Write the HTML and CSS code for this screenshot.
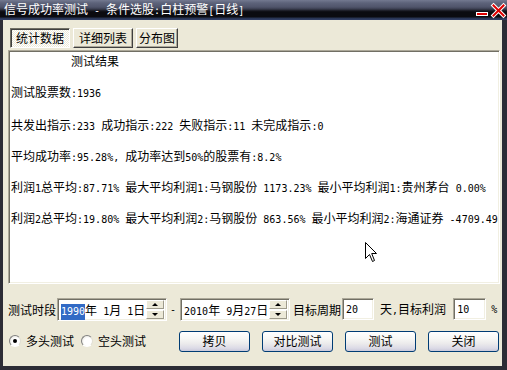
FILE: index.html
```html
<!DOCTYPE html>
<html>
<head>
<meta charset="utf-8">
<link rel="stylesheet" href="styles.css">
</head>
<body>
<div class="window">
  <div class="titlebar">
    <span class="title">信号成功率测试<span class="a"> - </span>条件选股<span class="a">:</span>白柱预警<span class="a">[</span>日线<span class="a">]</span></span>
    <svg class="tb-btns" width="31" height="20" viewBox="0 0 31 20">
      <rect x="0.5" y="12.5" width="11" height="3" fill="#e00000" stroke="#ffffff" stroke-width="1"/>
      <path d="M17.5 5.5 L27.5 15.5 M27.5 5.5 L17.5 15.5" stroke="#ffffff" stroke-width="4" stroke-linecap="square" fill="none"/>
      <path d="M17.5 5.5 L27.5 15.5 M27.5 5.5 L17.5 15.5" stroke="#e00000" stroke-width="2" stroke-linecap="square" fill="none"/>
    </svg>
  </div>
  <div class="client">
    <div class="tabs">
      <div class="tab tab-on">统计数据</div>
      <div class="tab">详细列表</div>
      <div class="tab tab-narrow">分布图</div>
    </div>
    <div class="report">
      <p class="heading">测试结果</p>
      <p>测试股票数<span class="a">:1936</span></p>
      <p class="line-b">共发出指示<span class="a">:233 </span>成功指示<span class="a">:222 </span>失败指示<span class="a">:11 </span>未完成指示<span class="a">:0</span></p>
      <p>平均成功率<span class="a">:95.28%, </span>成功率达到<span class="a">50%</span>的股票有<span class="a">:8.2%</span></p>
      <p>利润<span class="a">1</span>总平均<span class="a">:87.71% </span>最大平均利润<span class="a">1:</span>马钢股份<span class="a"> 1173.23% </span>最小平均利润<span class="a">1:</span>贵州茅台<span class="a"> 0.00%</span></p>
      <p>利润<span class="a">2</span>总平均<span class="a">:19.80% </span>最大平均利润<span class="a">2:</span>马钢股份<span class="a"> 863.56% </span>最小平均利润<span class="a">2:</span>海通证券<span class="a"> -4709.49</span></p>
    </div>
    <div class="params">
      <span class="label">测试时段</span>
      <div class="datebox first">
        <span class="date"><span class="a sel">1990</span>年<span class="a"> 1</span>月<span class="a"> 1</span>日</span>
        <div class="spin"><div class="spin-btn"><span class="arr up"></span></div><div class="spin-btn"><span class="arr down"></span></div></div>
      </div>
      <span class="a dash">-</span>
      <div class="datebox">
        <span class="date"><span class="a">2010</span>年<span class="a"> 9</span>月<span class="a">27</span>日</span>
        <div class="spin"><div class="spin-btn"><span class="arr up"></span></div><div class="spin-btn"><span class="arr down"></span></div></div>
      </div>
      <span class="label period">目标周期</span>
      <div class="field"><span class="a">20</span></div>
      <span class="label target">天<span class="a">,</span>目标利润</span>
      <div class="field field-profit"><span class="a">10</span></div>
      <span class="a pct">%</span>
    </div>
    <div class="actions">
      <label class="radio"><span class="dot checked"></span>多头测试</label>
      <label class="radio radio-2"><span class="dot"></span>空头测试</label>
      <div class="buttons">
        <div class="btn">拷贝</div>
        <div class="btn">对比测试</div>
        <div class="btn">测试</div>
        <div class="btn">关闭</div>
      </div>
    </div>
  </div>
  <svg class="cursor" width="13" height="21" viewBox="0 0 13 21">
    <path d="M0.5 0.5 L0.5 16.5 L4.5 12.5 L7.5 19.5 L9.5 18.5 L6.7 11.5 L11.5 11.5 Z" fill="#ffffff" stroke="#000000" stroke-width="1" stroke-linejoin="miter"/>
  </svg>
</div>
</body>
</html>
```

FILE: styles.css
```css
* {
  box-sizing: border-box;
  margin: 0;
  padding: 0;
}

html, body {
  width: 507px;
  height: 370px;
  overflow: hidden;
}

body {
  font-family: "Noto Sans CJK SC", sans-serif;
  font-size: 12px;
  color: #000;
  background: #ece9d8;
}

.a {
  font-family: "DejaVu Sans Mono", monospace;
  font-size: 10px;
}

.window {
  position: relative;
  width: 507px;
  height: 370px;
  display: flex;
  flex-direction: column;
}

.titlebar {
  flex: none;
  height: 20px;
  display: flex;
  align-items: flex-start;
  color: #fff;
  background: linear-gradient(180deg, #737990 0px, #5d637a 3px, #50556b 7px, #3a3e50 9px, #15151c 11px, #0b0b10 12px, #0b0b10 17px, #26324f 18px, #33416a 20px);
}

.title {
  margin: 3px 0 0 4px;
  height: 12px;
  line-height: 12px;
  white-space: pre;
}

.tb-btns {
  margin-left: auto;
  display: block;
}

.client {
  flex: 1;
  display: flex;
  flex-direction: column;
  border-left: 3px solid #2c2c35;
  border-right: 5px solid #2c2c35;
  border-bottom: 4px solid #2c2c35;
  padding-top: 8px;
}

.tabs {
  display: flex;
  gap: 3px;
  margin-left: 7px;
}

.tab {
  width: 60px;
  height: 20px;
  display: flex;
  align-items: center;
  justify-content: center;
  line-height: 12px;
  border: 1px solid;
  border-color: #fff #404040 #404040 #fff;
  box-shadow: inset -1px -1px #aca899;
}

.tab-narrow {
  width: 42px;
}

.tab-on {
  border-color: #716f64 #fff #fff #716f64;
  box-shadow: inset 1px 1px #404040;
  background: repeating-conic-gradient(#ffffff 0 25%, #ece9d8 0 50%) 0 0 / 2px 2px;
}

.report {
  margin: 2px 0 0 5px;
  width: 492px;
  height: 234px;
  background: #fff;
  border: 1px solid;
  border-color: #aca899 #fff #fff #aca899;
  box-shadow: inset 1px 1px #716f64, inset -1px -1px #f1efe2;
  padding: 4px 0 0 2px;
  display: flex;
  flex-direction: column;
  gap: 19px;
  overflow: hidden;
}

.report p {
  height: 12px;
  line-height: 12px;
  white-space: pre;
}

.report .heading {
  padding-left: 60px;
}

.report .line-b {
  margin-top: 2px;
}

.params {
  display: flex;
  align-items: center;
  height: 23px;
  margin: 14px 0 0 5px;
  white-space: pre;
}

.label {
  line-height: 12px;
}

.datebox {
  display: flex;
  align-items: center;
  width: 110px;
  height: 23px;
  background: #fff;
  border: 1px solid;
  border-color: #aca899 #fff #fff #aca899;
  box-shadow: inset 1px 1px #716f64, inset -1px -1px #f1efe2;
  padding: 0 2px 0 3px;
}

.datebox.first {
  margin-left: 1px;
}

.date {
  height: 16px;
  line-height: 16px;
}

.sel {
  display: inline-block;
  line-height: 16px;
  background: #316ac5;
  color: #fff;
}

.spin {
  margin-left: auto;
  display: flex;
  flex-direction: column;
  gap: 1px;
  width: 18px;
}

.spin-btn {
  height: 9px;
  display: flex;
  align-items: center;
  justify-content: center;
  background: #ece9d8;
  border: 1px solid;
  border-color: #fff #9d9a8b #9d9a8b #fff;
}

.arr {
  width: 0;
  height: 0;
  border-left: 3px solid transparent;
  border-right: 3px solid transparent;
}

.arr.up {
  border-bottom: 3px solid #000;
}

.arr.down {
  border-top: 3px solid #000;
}

.dash {
  margin: 0 4px 0 3px;
}

.period {
  margin-left: 3px;
}

.field {
  align-self: flex-start;
  width: 32px;
  height: 22px;
  margin-left: 1px;
  background: #fff;
  border: 1px solid;
  border-color: #aca899 #fff #fff #aca899;
  box-shadow: inset 1px 1px #716f64, inset -1px -1px #f1efe2;
  padding: 3px 0 0 3px;
  line-height: 12px;
}

.target {
  margin-left: 6px;
}

.field-profit {
  margin-left: 7px;
  width: 33px;
}

.pct {
  margin-left: 5px;
}

.actions {
  display: flex;
  align-items: center;
  height: 22px;
  margin: 9px 3px 0 6px;
}

.radio {
  display: flex;
  align-items: center;
  gap: 5px;
  line-height: 12px;
}

.radio-2 {
  margin-left: 7px;
}

.dot {
  width: 12px;
  height: 12px;
  border-radius: 50%;
  border: 1px solid;
  border-color: #808080 #e0ded4 #ffffff #808080;
  background: radial-gradient(circle at 60% 60%, #ffffff 0 45%, #dcdad0 100%);
  display: flex;
  align-items: center;
  justify-content: center;
}

.dot.checked::after {
  content: "";
  width: 4px;
  height: 4px;
  border-radius: 50%;
  background: #000;
}

.buttons {
  margin-left: auto;
  display: flex;
  gap: 12px;
}

.btn {
  width: 71px;
  height: 21px;
  display: flex;
  align-items: center;
  justify-content: center;
  line-height: 12px;
  border: 1px solid #003c74;
  border-radius: 3px;
  background: linear-gradient(180deg, #ffffff 0%, #f7f7f5 35%, #ecebec 60%, #dcdbe6 85%, #c9c8da 100%);
}

.cursor {
  position: absolute;
  left: 365px;
  top: 242px;
}
```
